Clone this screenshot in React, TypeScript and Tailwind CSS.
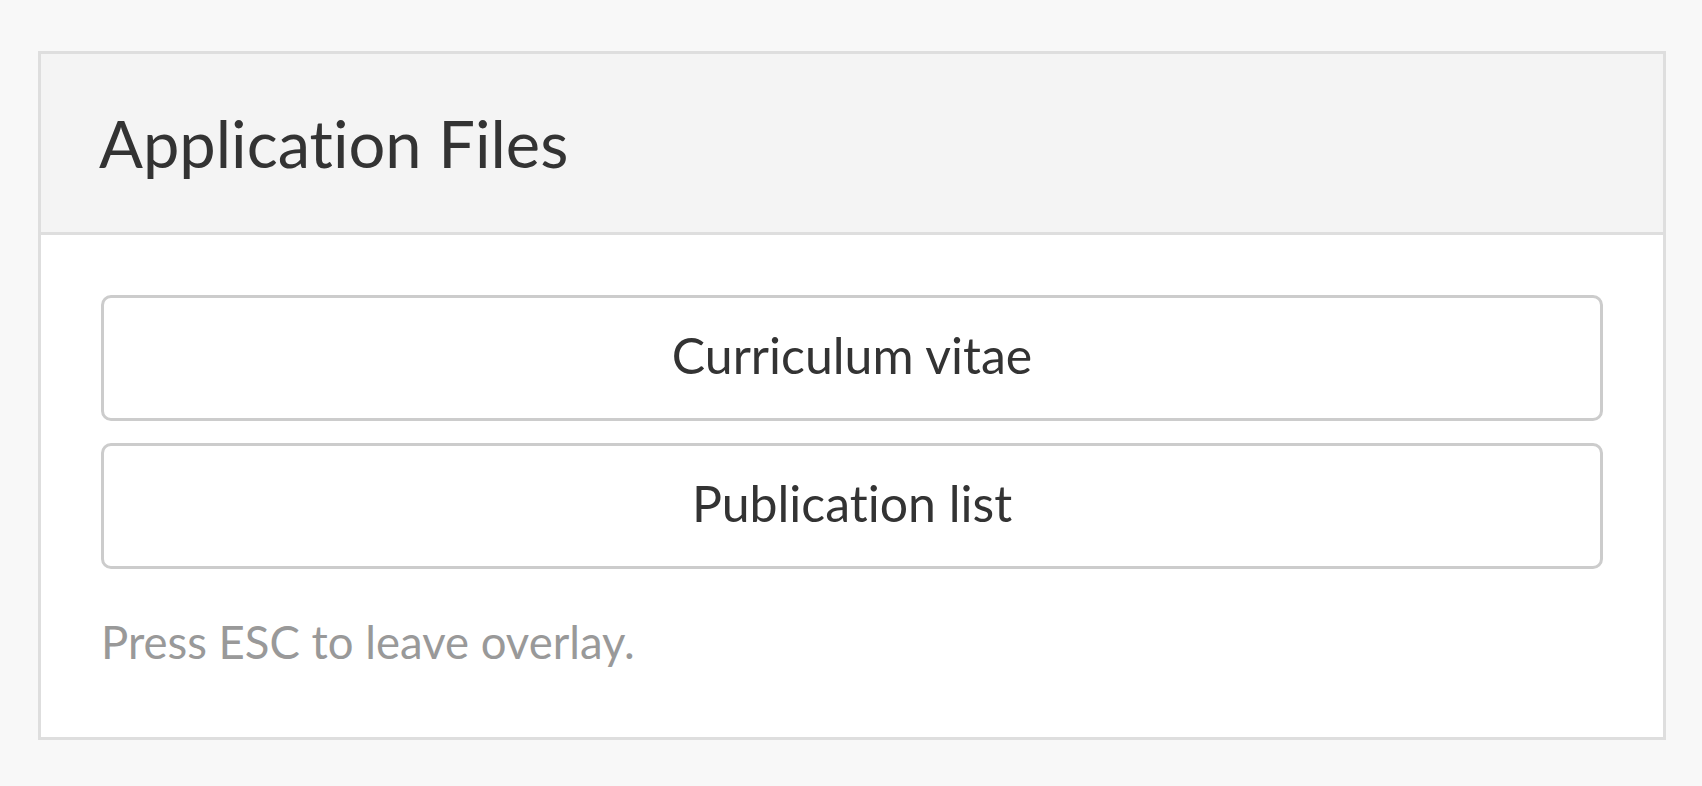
import React from "react";

const files = ["Curriculum vitae", "Publication list"];

const App: React.FC = () => {
    return (
        <div className="min-h-screen bg-[#f8f8f8] pl-[38px] pr-[36px] pt-[51px] pb-[40px] [font-variant-ligatures:none]" style={{ fontFamily: "Lato, 'Noto Sans', sans-serif" }}>
            <div className="border-[3px] border-[#dedede] bg-white">
                <div className="h-[181px] flex items-center bg-[#f4f4f4] border-b-[3px] border-[#dedede] pl-[58px]">
                    <h1 className="text-[65px] leading-none text-[#333333] font-normal">Application Files</h1>
                </div>
                <div className="px-[60px] pt-[60px] pb-[65px]">
                    <div className="flex flex-col gap-[22px]">
                        {files.map((f) => (
                            <button
                                key={f}
                                className="h-[126px] w-full flex items-center justify-center pb-[6px] rounded-[10px] border-[3px] border-[#cccccc] bg-white text-[50px] text-[#333333]"
                            >
                                {f}
                            </button>
                        ))}
                    </div>
                    <p className="mt-[43px] text-[45.5px] leading-[60px] text-[#999999]">Press ESC to leave overlay.</p>
                </div>
            </div>
        </div>
    );
};

export default App;
